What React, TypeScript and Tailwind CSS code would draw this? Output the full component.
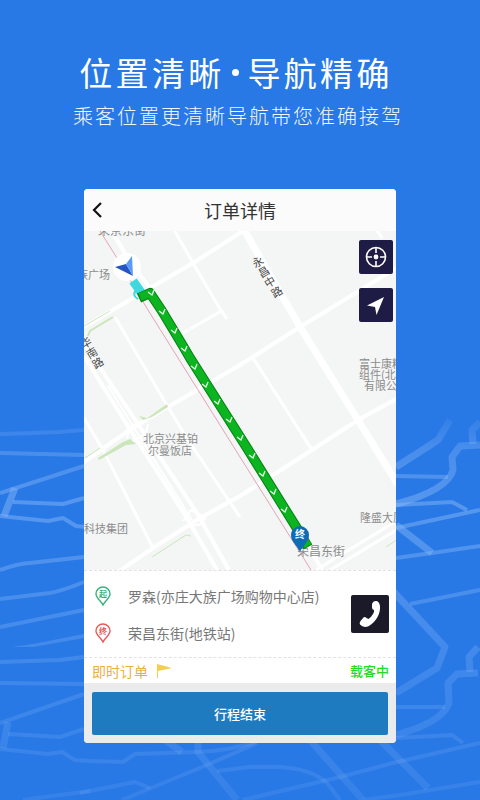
import type { ReactNode } from 'react';

const backdropLines = [
    // left edge
    'M0 434L60 432L84 430',
    'M0 453L84 455',
    'M0 493L84 466',
    'M13 502L63 504L84 498',
    'M0 516L48 521L63 518L76 526L86 527',
    'M0 570Q20 563 30 563L84 557',
    'M0 599L50 593Q62 591 84 582',
    'M0 627L84 610',
    'M0 662L60 660L84 657',
    'M0 683L84 684',
    'M0 723L84 694',
    'M8 734L60 737L84 729',
    'M0 749L48 754L62 752L75 760L90 761L123 762L135 754L197 752Q235 750 260 740',
    'M23 800L90 791',
    // right edge
    'M396 476L448 477',
    'M396 505L452 502L467 510',
    'M396 528L480 510',
    'M396 558L432 553L480 546',
    'M410 604L480 590',
    'M396 707L445 707',
    'M396 738L452 735L463 743',
    'M340 777L393 763L480 743',
    'M363 800L400 795L480 782',
    // bottom
    'M80 793L135 782L150 788',
    'M122 800L207 765L257 743',
    'M217 771L250 767H280Q312 769 327 783L340 800',
    'M243 800L340 777',
];

const backdropWide = [
    'M15 488L4 516',
    'M8 722L3 748',
    'M396 467L438 440L450 420',
    'M396 504Q448 490 453 470L452 457L460 446L480 445',
    'M473 444L472 430L480 422',
    'M396 525L432 553',
    'M390 588L445 647L437 668L396 693',
    'M396 735Q443 722 449 703L448 683L457 674L478 673',
    'M470 672L469 657L478 647',
    'M380 740L428 788',
    'M165 740L182 752',
    'M198 740V752L237 800',
    'M310 740L363 800',
];

function Backdrop() {
    return (
        <svg
            className="absolute inset-0 h-full w-full"
            viewBox="0 0 480 800"
            preserveAspectRatio="xMidYMax slice"
            fill="none"
            aria-hidden="true"
        >
            <defs>
                <linearGradient id="fade" gradientUnits="userSpaceOnUse" x1="0" y1="410" x2="0" y2="800">
                    <stop offset="0" stopColor="#8dbbf8" stopOpacity="0.05" />
                    <stop offset="0.1" stopColor="#8dbbf8" stopOpacity="0.32" />
                    <stop offset="0.25" stopColor="#8dbbf8" stopOpacity="0.46" />
                    <stop offset="0.65" stopColor="#8dbbf8" stopOpacity="0.24" />
                    <stop offset="1" stopColor="#8dbbf8" stopOpacity="0.14" />
                </linearGradient>
            </defs>
            <g stroke="url(#fade)" strokeLinejoin="round">
                {backdropLines.map((d) => (
                    <path key={d} d={d} strokeWidth="4" />
                ))}
                {backdropWide.map((d) => (
                    <path key={d} d={d} strokeWidth="7" />
                ))}
            </g>
            <path d="M12 647L33 644L84 634V638L33 647Z" fill="url(#fade)" />
        </svg>
    );
}

const roads = [
    { d: 'M243 228L300 327L358 420L398 485', w: 7 },
    { d: 'M398 267L300 327L240 365L168 407L128 431L84 462', w: 4 },
    { d: 'M398 398L358 420L312 450L240 496L200 518L153 548L118 572', w: 4 },
    { d: 'M243 231L193 263L150 288L84 327', w: 4 },
    { d: 'M173 228L193 263L220 309L227 319', w: 3 },
    { d: 'M223 310L183 333', w: 3 },
    { d: 'M112 231L130 262L150 288', w: 4 },
    { d: 'M115 317L168 407L188 440L240 517', w: 3 },
    { d: 'M253 358L312 450', w: 3 },
    { d: 'M303 436L312 450', w: 3 },
    { d: 'M84 418L103 450L153 548', w: 3 },
    { d: 'M84 356L133 434L187 518L217 570', w: 4 },
    { d: 'M84 344L142 430L197 513L229 570', w: 4 },
    { d: 'M108 386L138 434L192 520', w: 2 },
    { d: 'M398 520L316 570', w: 3 },
    { d: 'M398 529L330 570', w: 3 },
    { d: 'M306 542L322 570', w: 4 },
    { d: 'M376 229L382 238', w: 3 },
    { d: 'M183 521L191 510L202 516M186 527L202 524L208 512', w: 2 },
    { d: 'M127 438L131 426L143 421M133 441L146 434L148 424', w: 2 },
];

const arrows = [
    [151, 293], [162, 312], [174, 331], [184, 349], [194, 367], [205, 385], [217, 402],
    [229, 420], [240, 438], [252, 456], [262, 474], [273, 492], [284, 510],
];

const streetLetters = [
    { ch: '永', x: 258, y: 262 },
    { ch: '昌', x: 264, y: 272 },
    { ch: '中', x: 270, y: 282 },
    { ch: '路', x: 277, y: 292 },
    { ch: '华', x: 86, y: 343 },
    { ch: '南', x: 92, y: 353 },
    { ch: '路', x: 98, y: 363 },
];

function RouteMap() {
    return (
        <svg
            className="h-full w-full"
            viewBox="84 231 312 339"
            preserveAspectRatio="xMidYMid slice"
            fill="none"
            role="img"
            aria-label="路线地图"
        >
            <g stroke="#ffffff">
                {roads.map((r) => (
                    <path key={r.d} d={r.d} strokeWidth={r.w} />
                ))}
            </g>

            {/* Green belts */}
            <g stroke="#cbe6bb" strokeWidth="1">
                <path d="M84 326L110 311" />
                <path d="M88 336L90 331L113 317" strokeWidth="2" />
                <path d="M85 458L100 448" />
                <path d="M152 557L186 535L191 536" />
                <path d="M386 547L398 539" />
            </g>
            <g fill="#cbe6bb">
                <path d="M139 416L147 418L167 404L168 407L152 417L143 420Z" />
                <path d="M98 458L123 442L130 439L136 444L126 445L99 460Z" />
            </g>

            <path d="M100 231L117 258L148 310L240 457L311 570" stroke="#e3a3b4" strokeWidth="1" />

            {/* Labels */}
            <g fill="#8b8b8b" fontSize="11">
                <text x="98" y="235" fontSize="12">荣京东街</text>
                <text x="77" y="279">族广场</text>
                <text x="143" y="443">北京兴基铂</text>
                <text x="148" y="455">尔曼饭店</text>
                <text x="84" y="533">科技集团</text>
                <text x="359" y="368">富士康精</text>
                <text x="359" y="379">组件(北京)</text>
                <text x="364" y="390">有限公司</text>
                <text x="360" y="522">隆盛大厦</text>
                <text x="297" y="556" fontSize="12">荣昌东街</text>
            </g>
            <g fill="#4a4a4a" fontSize="11" textAnchor="middle">
                {streetLetters.map((s) => (
                    <text key={`${s.ch}${s.x}`} x={s.x} y={s.y + 4} transform={`rotate(-31 ${s.x} ${s.y})`}>
                        {s.ch}
                    </text>
                ))}
            </g>

            {/* Route */}
            <path d="M133 281L143 295" stroke="#3fd8df" strokeWidth="9" />
            <path d="M137 289Q131 295 138 299" stroke="#3fd8df" strokeWidth="2" />
            <path
                d="M139 298L150 293L162 311L183 346L190 358L247 448L298 530L308 547"
                stroke="#078016"
                strokeWidth="10"
                strokeLinejoin="round"
            />
            <path
                d="M140 297L150 293L162 311L183 346L190 358L247 448L298 530L308 546"
                stroke="#0cb420"
                strokeWidth="8"
                strokeLinejoin="round"
            />
            <g stroke="#e6ffe6" strokeWidth="1.3">
                {arrows.map(([x, y]) => (
                    <path key={y} d={`M${x - 3} ${y - 1}L${x + 1} ${y + 2}L${x + 3} ${y - 3}`} />
                ))}
            </g>

            {/* Vehicle */}
            <circle cx="127" cy="267" r="14" fill="#ffffff" />
            <path d="M115 267L126 264L133 276Z" fill="#2455c3" />
            <path d="M132 256L126 264L133 276Z" fill="#5b9af5" />

            {/* Destination */}
            <path d="M300 552C297 545 291 542 291 535A9 9 0 0 1 309 535C309 542 303 545 300 552Z" fill="#0f6cb4" />
            <text x="300" y="538" fontSize="10" fontWeight="700" textAnchor="middle" fill="#ffffff">
                终
            </text>
        </svg>
    );
}

function MapButton({ label, children }: { label: string; children: ReactNode }) {
    return (
        <button
            type="button"
            aria-label={label}
            className="flex h-[34px] w-[34px] items-center justify-center rounded-xs bg-[#1e1b45] text-white"
        >
            {children}
        </button>
    );
}

function Pin({ text, color }: { text: string; color: string }) {
    return (
        <svg className="h-[22px] w-[18px] shrink-0" viewBox="0 0 18 22" fill="none" aria-hidden="true">
            <path
                d="M9 20C7 16 2 13 2 9A7 7 0 0 1 16 9C16 13 11 16 9 20Z"
                stroke={color}
                strokeWidth="1.4"
            />
            <text x="9" y="12" fontSize="8" fontWeight="700" textAnchor="middle" fill={color}>
                {text}
            </text>
        </svg>
    );
}

const stops = [
    { mark: '起', color: '#35b37e', name: '罗森(亦庄大族广场购物中心店)' },
    { mark: '终', color: '#e85a5a', name: '荣昌东街(地铁站)' },
];

export default function App() {
    return (
        <div className="relative min-h-screen overflow-hidden bg-[#2878e6] font-['Noto_Sans_CJK_SC',sans-serif]">
            <Backdrop />

            <main className="relative flex flex-col items-center pt-12 pb-14">
                <h1 className="flex items-center pr-2 text-[33px] leading-[48px] tracking-widest text-white">
                    位置清晰
                    <span className="mr-[9px] ml-[7px] h-[7px] w-[7px] rounded-full bg-white" />
                    导航精确
                </h1>
                <p className="mt-1.5 pr-1 text-xl leading-7 font-light tracking-widest whitespace-nowrap text-[#f0f7ff]">
                    乘客位置更清晰导航带您准确接驾
                </p>

                <section className="mt-[59px] w-[65%] overflow-hidden rounded-sm bg-white">
                    {/* Header */}
                    <header className="flex h-[42px] items-center bg-[#fbfbfb] px-1">
                        <button type="button" aria-label="返回" className="flex h-8 w-5 items-center justify-center">
                            <svg className="h-4 w-4" viewBox="0 0 16 16" fill="none">
                                <path d="M11 1L4 8L11 15" stroke="#111111" strokeWidth="2.2" />
                            </svg>
                        </button>
                        <h2 className="flex-1 pr-5 text-center text-lg text-[#333333]">订单详情</h2>
                    </header>

                    {/* Map */}
                    <div className="relative h-[339px] bg-[#f4f6f5]">
                        <RouteMap />
                        <div className="absolute top-[9px] right-[3px] flex flex-col gap-[14px]">
                            <MapButton label="定位">
                                <svg className="h-6 w-6" viewBox="0 0 24 24" fill="none" stroke="currentColor">
                                    <circle cx="12" cy="12" r="9.5" strokeWidth="1.6" />
                                    <path d="M12 3v5M12 16v5M3 12h5M16 12h5" strokeWidth="1.6" />
                                    <circle cx="12" cy="12" r="2.4" fill="currentColor" stroke="none" />
                                </svg>
                            </MapButton>
                            <MapButton label="导航">
                                <svg className="h-6 w-6" viewBox="0 0 24 24" fill="currentColor">
                                    <path d="M20 4L12.500 22L11 14L3 12.500Z" />
                                </svg>
                            </MapButton>
                        </div>
                    </div>

                    {/* Stops */}
                    <div className="flex items-center border-y border-dashed border-[#e2e2e2] py-1.5 pr-[7px] pl-[10px]">
                        <ul className="flex-1">
                            {stops.map((stop) => (
                                <li
                                    key={stop.mark}
                                    className="flex h-[37px] items-center gap-4 text-sm whitespace-nowrap text-[#777777]"
                                >
                                    <Pin text={stop.mark} color={stop.color} />
                                    {stop.name}
                                </li>
                            ))}
                        </ul>
                        <button
                            type="button"
                            aria-label="拨打电话"
                            className="h-[38px] w-[38px] shrink-0 rounded-xs bg-[#1b1a29] text-white"
                        >
                            <svg className="h-full w-full" viewBox="0 0 38 38" fill="currentColor">
                                <path d="M21 9Q22 6 25 6Q28 6 29 11Q29.500 17 26 23Q22 29 17 31.500Q12 33 9 29.500Q8 28 9.500 26L12.500 22.500Q14 21.500 15.500 23L17.500 24Q20 22.500 22 19Q23.500 16.500 23 15Q21 14.500 21 12.500Z" />
                            </svg>
                        </button>
                    </div>

                    {/* Order state */}
                    <div className="flex h-[25px] items-center justify-between pr-[7px] pl-2">
                        <div className="flex items-center gap-2 text-sm text-[#e9b23c]">
                            即时订单
                            <svg className="h-4 w-4" viewBox="0 0 16 16" aria-hidden="true">
                                <path d="M1 1L16 5L2 8V15H1Z" fill="#f3cf4f" />
                            </svg>
                        </div>
                        <span className="text-[13px] font-medium text-[#22dd22]">载客中</span>
                    </div>

                    <div className="bg-[#ebebeb] px-2 pt-[9px] pb-2">
                        <button
                            type="button"
                            className="h-[43px] w-full rounded-xs bg-[#1f7bbf] text-[13px] font-medium text-white"
                        >
                            行程结束
                        </button>
                    </div>
                </section>
            </main>
        </div>
    );
}
